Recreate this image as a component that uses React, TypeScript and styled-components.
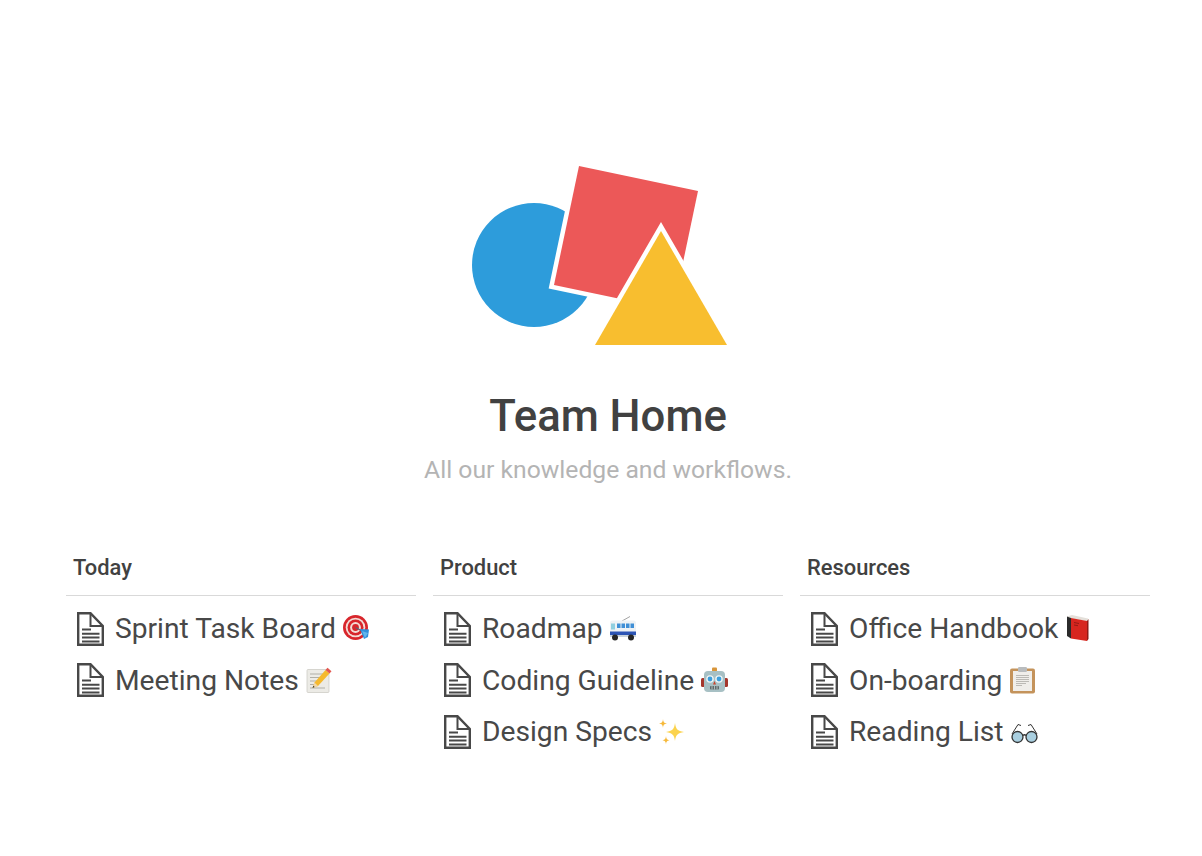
import { ReactNode } from "react";
import styled, { createGlobalStyle } from "styled-components";

const GlobalStyle = createGlobalStyle`
  html, body {
    margin: 0;
    padding: 0;
    background: #fff;
    font-family: Roboto, "Liberation Sans", sans-serif;
    color: #444;
  }
`;

const Page = styled.div`
  width: 1202px;
  height: 856px;
  box-sizing: border-box;
  padding: 160px 52px 0 66px;
  overflow: hidden;
`;

const Hero = styled.header`
  display: flex;
  flex-direction: column;
  align-items: center;
`;

const Logo = styled.svg`
  display: block;
  width: 280px;
  height: 190px;
`;

const Title = styled.h1`
  margin: 37px 0 0;
  font-size: 43.7px;
  line-height: 58px;
  font-weight: 500;
  color: #414141;
`;

const Subtitle = styled.p`
  margin: 8px 0 0;
  font-size: 24.7px;
  line-height: 34px;
  font-weight: 400;
  color: #b4b4b4;
`;

const Columns = styled.div`
  display: grid;
  grid-template-columns: repeat(3, 350px);
  column-gap: 17px;
  margin-top: 64px;
`;

const Heading = styled.h2`
  margin: 0;
  height: 44px;
  padding: 0 0 0 7px;
  border-bottom: 1px solid #d9d9d9;
  font-size: 21.9px;
  line-height: 33px;
  font-weight: 500;
  color: #414141;
`;

const List = styled.ul`
  list-style: none;
  margin: 7px 0 0;
  padding: 0;
`;

const Row = styled.li`
  display: flex;
  align-items: center;
  height: 51.5px;
  padding-left: 11px;
  font-size: 28.2px;
  color: #484848;
`;

const DocGlyph = styled.svg`
  flex: none;
  width: 27px;
  height: 34px;
  margin-right: 11px;
`;

const Emoji = styled.svg`
  flex: none;
  width: 29px;
  height: 29px;
  margin-left: 6px;
`;

const DocIcon = () => (
  <DocGlyph viewBox="0 0 27 34" fill="none" stroke="#484848">
    <path d="M1.2 1.2H13.5L25.8 14V32.8H1.2Z" strokeWidth="2.4" />
    <path d="M13.5 1.500V14H25.500" strokeWidth="2" />
    <path d="M5 17.500H14M5 21.800H22.500M5 25.600H22.500M5 29.400H22.500" strokeWidth="2" />
  </DocGlyph>
);

const Target = () => (
  <Emoji viewBox="0 0 29 29">
    <circle cx="13.500" cy="13.500" r="12.500" fill="#d8262c" />
    <circle cx="13.500" cy="13.500" r="9.800" fill="#f3dcd6" />
    <circle cx="13.500" cy="13.500" r="8" fill="#d8262c" />
    <circle cx="13.500" cy="13.500" r="5.400" fill="#f3dcd6" />
    <circle cx="13.500" cy="13.500" r="3.400" fill="#d8262c" />
    <path d="M13.500 13.500L20 17" stroke="#567" strokeWidth="1.400" />
    <path d="M18 15L27 15.500L26 23L22 25Z" fill="#2f8fdc" />
    <path d="M20 17L26 19L23 24Z" fill="#62b5ec" />
  </Emoji>
);

const Memo = () => (
  <Emoji viewBox="0 0 29 29">
    <rect x="2" y="3.500" width="22" height="23" rx="1" fill="#ecebe6" stroke="#c9c7c0" strokeWidth="0.700" />
    <path d="M5 8H20M5 11.500H18M5 15H14M5 18.500H11M5 22H20" stroke="#aaa89f" strokeWidth="0.900" />
    <path d="M7.500 22L9.500 16.500L20.500 4L24.500 7.500L13 20Z" fill="#f5b92e" />
    <path d="M20.500 4L22.500 1.800L26.500 5.200L24.500 7.500Z" fill="#e3574f" />
    <path d="M7.500 22L9.500 16.500L13 20Z" fill="#f0d6a8" />
    <path d="M7.500 22L8.300 19.800L9.700 21Z" fill="#333" />
  </Emoji>
);

const Bus = () => (
  <Emoji viewBox="0 0 29 29">
    <path d="M13 7L21 2.500" stroke="#999" strokeWidth="0.900" />
    <path d="M1 9a2.500 2.500 0 0 1 2.500-2.500h21A2.500 2.500 0 0 1 27 9v13H1Z" fill="#eef2f5" />
    <path d="M2 9.500h4v6H2Z" fill="#8fcfe0" />
    <path d="M8 9.500h3.500v4.500H8ZM12.500 9.500H16v4.500h-3.500ZM17 9.500h3.500v4.500H17ZM21.500 9.500H25v4.500h-3.500Z" fill="#3f8fd6" />
    <rect x="1" y="17.500" width="26" height="3.500" fill="#2d55b5" />
    <rect x="1" y="21" width="26" height="2" fill="#c9d3dc" />
    <circle cx="6" cy="23.500" r="3" fill="#262626" />
    <circle cx="22" cy="23.500" r="3" fill="#262626" />
  </Emoji>
);

const Robot = () => (
  <Emoji viewBox="0 0 29 29">
    <rect x="1" y="12" width="4" height="9" rx="1.500" fill="#a5372d" />
    <rect x="24" y="12" width="4" height="9" rx="1.500" fill="#a5372d" />
    <rect x="12" y="1.500" width="5" height="4" rx="1" fill="#d8953a" />
    <rect x="4" y="5" width="21" height="21" rx="4" fill="#a7c0c4" />
    <circle cx="10" cy="13" r="3.800" fill="#eef4f5" />
    <circle cx="19" cy="13" r="3.800" fill="#eef4f5" />
    <circle cx="10" cy="13" r="2.400" fill="#3d9fdc" />
    <circle cx="19" cy="13" r="2.400" fill="#3d9fdc" />
    <path d="M14.500 15L16 18.500H13Z" fill="#c9452f" />
    <rect x="10" y="20" width="9" height="3.500" rx="0.800" fill="#5d6a6c" />
    <path d="M12 20v3.500M14.500 20v3.500M17 20v3.500" stroke="#d5dcdc" strokeWidth="0.700" />
  </Emoji>
);

const Sparkles = () => (
  <Emoji viewBox="0 0 29 29">
    <path d="M17 6C17.800 12 19.500 14 26 15C19.500 16 17.800 18 17 24C16.200 18 14.500 16 8 15C14.500 14 16.200 12 17 6Z" fill="#fbd34d" />
    <path d="M5 2C5.300 5 6 6 9 6.500C6 7 5.300 8 5 11C4.700 8 4 7 1 6.500C4 6 4.700 5 5 2Z" fill="#f6b93b" />
    <path d="M8 19C8.300 22 9 22.800 11.500 23.300C9 23.800 8.300 24.500 8 27.500C7.700 24.500 7 23.800 4.500 23.300C7 22.800 7.700 22 8 19Z" fill="#f6b93b" />
  </Emoji>
);

const Book = () => (
  <Emoji viewBox="0 0 29 29">
    <path d="M3 2.500L8 1L24 4.500V7.500L8 4.500Z" fill="#e4e0da" />
    <path d="M3 2.500L7 4V24.500L3 22Z" fill="#2b2b2b" />
    <path d="M7 4L23 7V27L7 24.500Z" fill="#d7261f" />
    <path d="M23 7L24.500 5V25L23 27Z" fill="#8f1914" />
    <path d="M10 8.500L15 9.500M10 11L14 11.700" stroke="#8f1914" strokeWidth="0.900" />
  </Emoji>
);

const Clipboard = () => (
  <Emoji viewBox="0 0 29 29">
    <rect x="2" y="2.500" width="25" height="25" rx="2" fill="#c4935b" />
    <rect x="5" y="5" width="19" height="20" fill="#f0eeea" />
    <rect x="10" y="1" width="9" height="5" rx="1.200" fill="#b9bcbe" />
    <path d="M8 9.500H21M8 11.500H21M8 13.500H21M8 15.500H21M8 17.500H18M8 19.500H14" stroke="#bcbab5" strokeWidth="1" />
  </Emoji>
);

const Glasses = () => (
  <Emoji viewBox="0 0 29 29">
    <path d="M2 17L8 7.500L11 8.500M27 17L21 7.500L18 8.500" fill="none" stroke="#333" strokeWidth="1" />
    <circle cx="7.500" cy="20" r="5.500" fill="#a9cfe0" stroke="#333" strokeWidth="1.300" />
    <circle cx="21.500" cy="20" r="5.500" fill="#a9cfe0" stroke="#333" strokeWidth="1.300" />
    <path d="M13 18.500Q14.500 17 16 18.500" fill="none" stroke="#333" strokeWidth="1.300" />
  </Emoji>
);

type Item = { label: string; emoji: ReactNode };

const sections: { title: string; items: Item[] }[] = [
  {
    title: "Today",
    items: [
      { label: "Sprint Task Board", emoji: <Target /> },
      { label: "Meeting Notes", emoji: <Memo /> },
    ],
  },
  {
    title: "Product",
    items: [
      { label: "Roadmap", emoji: <Bus /> },
      { label: "Coding Guideline", emoji: <Robot /> },
      { label: "Design Specs", emoji: <Sparkles /> },
    ],
  },
  {
    title: "Resources",
    items: [
      { label: "Office Handbook", emoji: <Book /> },
      { label: "On-boarding", emoji: <Clipboard /> },
      { label: "Reading List", emoji: <Glasses /> },
    ],
  },
];

export default function App() {
  return (
    <Page>
      <GlobalStyle />
      <Hero>
        <Logo viewBox="468 160 280 190">
          <circle cx="534" cy="265" r="62" fill="#2d9cdb" />
          <path
            d="M579 166L698 191L673 310L554 285Z"
            fill="#ec5858"
            stroke="#fff"
            strokeWidth="9"
            paintOrder="stroke"
          />
          <path
            d="M661 231L727 345H595Z"
            fill="#f8be2f"
            stroke="#fff"
            strokeWidth="9"
            paintOrder="stroke"
          />
        </Logo>
        <Title>Team Home</Title>
        <Subtitle>All our knowledge and workflows.</Subtitle>
      </Hero>
      <Columns>
        {sections.map((section) => (
          <section key={section.title}>
            <Heading>{section.title}</Heading>
            <List>
              {section.items.map((item) => (
                <Row key={item.label}>
                  <DocIcon />
                  {item.label}
                  {item.emoji}
                </Row>
              ))}
            </List>
          </section>
        ))}
      </Columns>
    </Page>
  );
}
